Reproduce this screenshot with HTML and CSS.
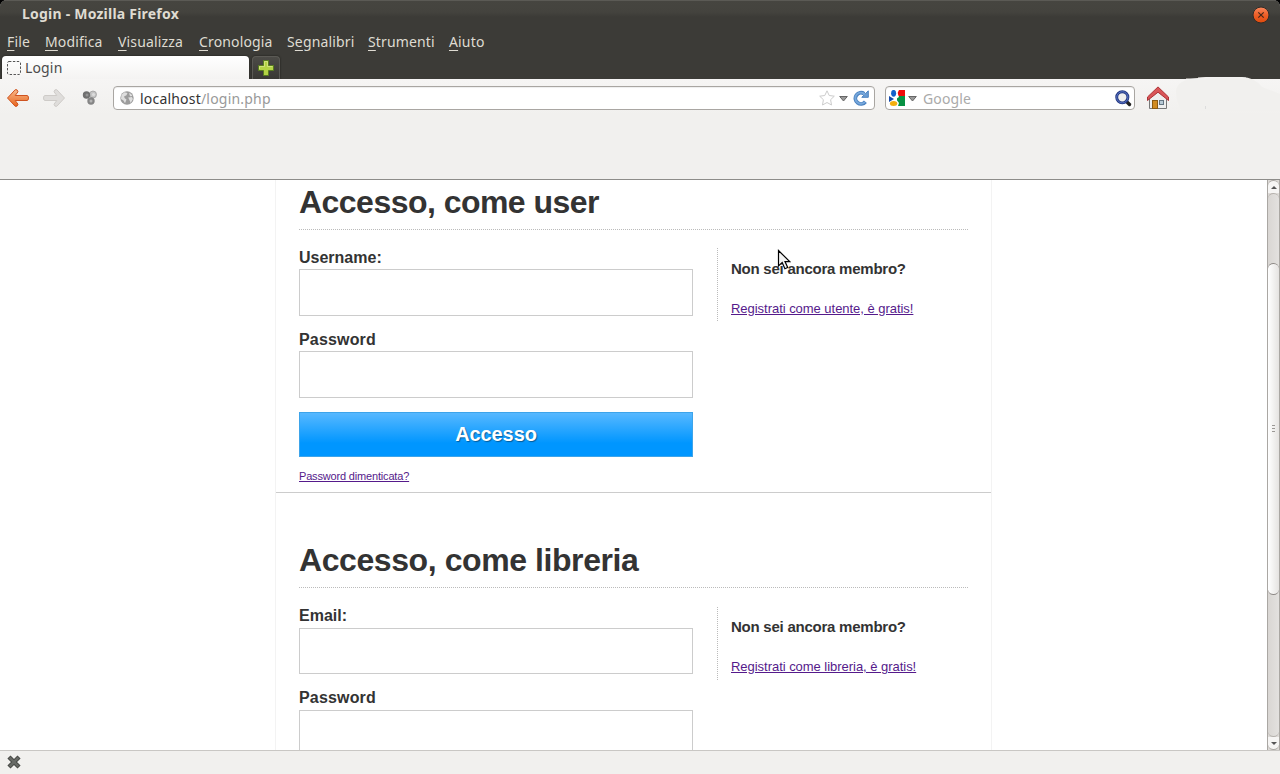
FILE: index.html
```html
<!DOCTYPE html>
<html lang="it">
<head>
<meta charset="utf-8">
<title>Login</title>
<link rel="stylesheet" href="styles.css">
</head>
<body>
<div class="window">
  <header class="chrome">
    <div class="titlebar">
      <span class="title">Login - Mozilla Firefox</span>
      <svg class="close" width="18" height="18" viewBox="0 0 18 18"><defs><linearGradient id="cg" x2="0" y2="1"><stop stop-color="#f9895f"/><stop offset=".5" stop-color="#ee5f28"/><stop offset="1" stop-color="#df4a0c"/></linearGradient></defs><circle cx="9" cy="9" r="8" fill="url(#cg)" stroke="#2f2c28"/><path d="M6.300 6.300l5.400 5.400M11.700 6.300l-5.400 5.400" stroke="#45281a" stroke-width="1.200"/></svg>
    </div>
    <nav class="menu">
      <span><u>F</u>ile</span><span><u>M</u>odifica</span><span><u>V</u>isualizza</span><span><u>C</u>ronologia</span><span>S<u>e</u>gnalibri</span><span><u>S</u>trumenti</span><span><u>A</u>iuto</span>
    </nav>
    <div class="tabs">
      <div class="tab"><svg width="14" height="14" viewBox="0 0 14 14"><rect x=".5" y=".5" width="13" height="13" rx="1.500" fill="none" stroke="#555" stroke-dasharray="2.400 1.500"/></svg><span>Login</span></div>
      <div class="newtab"><svg width="18" height="18" viewBox="0 0 18 18"><path d="M6.500 1.500h5v5h5v5h-5v5h-5v-5h-5v-5h5z" fill="#b4d445" stroke="#587c20"/><path d="M7.500 7.500V2.500h3v5h5M2.500 10V7.500h5" fill="none" stroke="#d0e37c"/></svg></div>
    </div>
  </header>
  <div class="toolbar">
    <svg class="back" width="24" height="20" viewBox="0 0 24 20"><defs><linearGradient id="bg" x2="0" y2="1"><stop stop-color="#f8b98a"/><stop offset="1" stop-color="#e8651d"/></linearGradient></defs><path d="M1.500 10L9.200 1.700Q11.500 1 12 3.800L9.200 7.500H21Q22.500 7.500 22.500 10T21 12.500H9.200L12 16.200Q11.500 19 9.200 18.300Z" fill="url(#bg)" stroke="#ce5320"/></svg>
    <svg class="forward" width="24" height="20" viewBox="0 0 24 20"><path d="M22.500 10L14.800 1.700Q12.500 1 12 3.800L14.800 7.500H3Q1.500 7.500 1.500 10T3 12.500H14.800L12 16.200Q12.500 19 14.800 18.300Z" fill="#dfdddb" stroke="#cecbc8"/></svg>
    <svg class="addon" width="16" height="16" viewBox="0 0 16 16"><circle cx="11" cy="4.500" r="3.500" fill="#c4c4c4" stroke="#999" stroke-width=".7"/><circle cx="4.500" cy="5" r="3.700" fill="#707070"/><circle cx="9" cy="11" r="3.700" fill="#858585"/><circle cx="5" cy="5" r="1.500" fill="#949494"/><circle cx="9" cy="11" r="1.500" fill="#b5b5b5"/><circle cx="11.500" cy="4.500" r="1.500" fill="#ddd"/></svg>
    <div class="field url">
      <svg width="14" height="14" viewBox="0 0 14 14"><circle cx="7" cy="7" r="6.700" fill="#9c9c9c"/><path d="M1.500 3.800L4.500 1.300 7.500 2 6.500 4.300 4 5.600 4.800 7.300 6.500 8.600 5 12.300 3.500 9.600 1 8ZM9.300 1.500l3.200 3-1.700 1-1.300-1.200ZM8.200 6.600l3.700-.5 1 2-2.200 3.900-1.300-3z" fill="#dedede"/></svg>
      <span class="address">localhost<i>/login.php</i></span>
      <svg class="star" width="16" height="16" viewBox="0 0 16 16"><path d="M8 .8l2.200 4.700 5.100.7-3.700 3.500.9 5.300L8 12.500l-4.500 2.500.9-5.300L.7 6.200l5.100-.7z" fill="#fff" stroke="#ccc"/></svg>
      <svg class="drop" width="9" height="6" viewBox="0 0 9 6"><path d="M.7.500h7.600L4.500 5z" fill="#999" stroke="#666"/></svg>
      <svg class="reload" width="16" height="16" viewBox="0 0 16 16"><path d="M12.400 11.800A5.600 5.600 0 1 1 11.200 3.700" fill="none" stroke="#4c83c0" stroke-width="3.800"/><path d="M8.800 7.300L15.300.8V7.300z" fill="#6b9dd2" stroke="#4c83c0"/><path d="M12 12A5.600 5.600 0 1 1 12 4.300" fill="none" stroke="#77a8dc" stroke-width="1.800"/></svg>
    </div>
    <div class="field search">
      <svg width="16" height="16" viewBox="0 0 16 16"><path d="M8 0h8v6H9z" fill="#f00b0b"/><path d="M8 6h8v10H8z" fill="#079143"/><path d="M0 6l5 3-5 3z" fill="#164aab"/><path d="M5 0h5L8.500 3 10 7 7 9l3 4-1 3H5z" fill="#fff"/><ellipse cx="4.600" cy="3.300" rx="2.500" ry="3.400" fill="#1260cb"/><ellipse cx="4.600" cy="13.500" rx="3.700" ry="2.500" fill="#f4af0c"/></svg>
      <svg class="drop" width="9" height="6" viewBox="0 0 9 6"><path d="M.7.500h7.600L4.500 5z" fill="#999" stroke="#666"/></svg>
      <span class="placeholder">Google</span>
      <svg width="17" height="17" viewBox="0 0 17 17"><path d="M11.500 11.500l3 3" stroke="#222" stroke-width="3.400" stroke-linecap="round"/><circle cx="7.300" cy="7.300" r="5.600" fill="#eee" stroke="#263a83" stroke-width="2.900"/><circle cx="7.300" cy="7.300" r="5.600" fill="none" stroke="#5773c5" stroke-width="1"/></svg>
    </div>
    <svg class="home" width="24" height="24" viewBox="0 0 24 24"><path d="M3.500 11L12 3.500l8.500 7.500v11.500h-17z" fill="#eee" stroke="#777"/><path d="M1.500 11L12 .9l10.500 10.100v3.500L12 6.200 1.500 14.500z" fill="#d95558" stroke="#ad3035"/><rect x="6.500" y="14.500" width="5" height="8" fill="#d18b20" stroke="#8b5a11"/><rect x="13.500" y="14.500" width="4" height="4" fill="#b7c9d5" stroke="#647582"/></svg>
    <svg class="smudge" width="104" height="34" viewBox="0 0 104 34"><path d="M0 15Q0 5 14 2L30 0H66Q78 0 86 10L104 17V34H6Q0 25 0 15Z" fill="#f1f0ee"/><path d="M10 2H30M22 1Q45 0 70 1" stroke="#f4f3f1" fill="none"/><path d="M29.500 29v3" stroke="#ddd"/></svg>
  </div>
  <div class="viewport">
    <main class="page">
      <section class="login first">
        <h1>Accesso, come user</h1>
        <div class="columns">
          <form class="form">
            <label for="user">Username:</label><input id="user">
            <label class="password" for="pass">Password</label><input id="pass" type="password">
            <button type="button">Accesso</button>
            <a class="forgot" href="#">Password dimenticata?</a>
          </form>
          <aside><h2>Non sei ancora membro?</h2><a href="#">Registrati come utente, è gratis!</a></aside>
        </div>
      </section>
      <section class="login second">
        <h1>Accesso, come libreria</h1>
        <div class="columns">
          <form class="form">
            <label for="email">Email:</label><input id="email">
            <label class="password" for="pass2">Password</label><input id="pass2" type="password">
          </form>
          <aside><h2>Non sei ancora membro?</h2><a href="#">Registrati come libreria, è gratis!</a></aside>
        </div>
      </section>
    </main>
    <div class="scrollbar">
      <div class="arrow up"><svg width="6" height="3" viewBox="0 0 6 3"><path d="M0 3L3 0l3 3z" fill="#555"/></svg></div>
      <div class="track"><div class="thumb"><i></i><i></i><i></i></div></div>
      <div class="arrow down"><svg width="6" height="3" viewBox="0 0 6 3"><path d="M0 0h6L3 3z" fill="#555"/></svg></div>
    </div>
  </div>
  <footer class="addonbar"><svg width="14" height="14" viewBox="0 0 14 14"><path d="M3.500 3.500l7 7M10.500 3.500l-7 7" stroke="#484a46" stroke-width="4.400" stroke-linecap="square"/><path d="M3.500 3.500l7 7M10.500 3.500l-7 7" stroke="#686a66" stroke-width="2.400" stroke-linecap="square"/></svg></footer>
  <svg class="pointer" width="14" height="22" viewBox="0 0 14 22"><path d="M1.500 1.500V17l3.700-3.400 2.700 6.200 2.800-1.300L8 12.600h4.700z" fill="#f5f5f5" stroke="#000" stroke-width="1.200"/></svg>
</div>
</body>
</html>
```

FILE: styles.css
```css
* { box-sizing: border-box; }
body { margin: 0; background: #000; }
svg { display: block; flex: none; }
.window {
  position: relative; width: 1280px; height: 774px; overflow: hidden;
  display: flex; flex-direction: column;
  border-radius: 7px 7px 0 0; background: #fff;
  font-family: "Noto Sans", sans-serif; font-size: 14px;
}
.chrome { height: 79px; flex: none; color: #dfdbd2; background: #3c3b37; }
.titlebar {
  height: 28px; display: flex; align-items: center; justify-content: space-between;
  padding: 0 10px 0 22px; border-top: 1px solid #5b5a55;
  background: linear-gradient(#464540 0, #44433e 11px, #3c3b37 16px);
  font-weight: bold; font-size: 14px;
}
.title { letter-spacing: .22px; line-height: 26px; margin-bottom: 1px; }
.menu {
  height: 28px; display: grid; align-items: start; line-height: 27px; padding-left: 7px;
  grid-template-columns: 38px 73px 81px 88px 81px 81px 60px; letter-spacing: .15px;
}
.menu u { text-underline-offset: 3px; text-decoration-skip-ink: none; }
.tabs { height: 23px; display: flex; gap: 3px; padding-left: 2px; }
.tab {
  width: 247px; display: flex; align-items: center; gap: 4px; padding-left: 5px;
  color: #4c4c4c; background: linear-gradient(#fff, #f4f3f2); border-radius: 4px 4px 0 0;
  letter-spacing: .15px;
}
.tab, .newtab { box-shadow: 0 0 2px #171714; }
.newtab {
  width: 28px; display: grid; place-items: center; border: 1px solid #5b5a55; border-bottom: 0;
  border-radius: 4px 4px 0 0; background: linear-gradient(#4c4b47, #393834);
}
.newtab svg { margin-top: -1px; }
.toolbar {
  position: relative; height: 101px; flex: none; display: flex; align-items: flex-start;
  padding: 7px 0 0 6px; background: linear-gradient(#f6f5f4, #f1f0ee 36px); border-bottom: 1px solid #8d8c89;
}
.back, .forward { margin-top: 2px; }
.forward { margin-left: 12px; }
.addon { margin: 4px 16px 0; }
.field {
  height: 24px; display: flex; align-items: center; background: #fff;
  border: 1px solid #a9a6a2; border-radius: 4px; box-shadow: inset 0 1px 1px #eee;
}
.url { width: 762px; margin-left: -1px; padding: 0 5px 0 6px; }
.address { flex: 1; margin-left: 6px; color: #333; letter-spacing: .2px; }
.address i { font-style: normal; color: #999; }
.url .drop { margin: 2px 5px 0 4px; }
.search { width: 250px; margin-left: 10px; padding: 0 2px 0 3px; }
.search .drop { margin: 2px 6px 0 3px; }
.placeholder { flex: 1; color: #aaa; letter-spacing: .15px; }
.home { margin-left: 11px; }
.smudge { position: absolute; right: 0; top: -2px; }
.viewport { height: 570px; flex: none; display: flex; background: #fff; }
.page {
  width: 717px; height: 570px; overflow: hidden; margin-left: 275px;
  border: solid #f3f3f3; border-width: 0 1px; color: #333;
  font-family: "Liberation Sans", Arial, sans-serif;
}
.login { padding: 47px 23px 0; height: 358px; }
.login.first { height: 313px; padding-top: 2px; border-bottom: 1px solid #ccc; }
h1 { height: 48px; margin: 0; line-height: 41px; font-size: 32px; letter-spacing: -.53px; border-bottom: 1px dotted #bbb; white-space: nowrap; }
.second h1 { letter-spacing: -.42px; }
.columns { display: flex; align-items: flex-start; padding-top: 18px; }
.form { width: 394px; display: flex; flex-direction: column; }
label { height: 21px; line-height: 19px; font-size: 16px; font-weight: bold; }
.password { letter-spacing: .17px; }
input { width: 394px; height: 47px; margin: 0 0 14px; padding: 0; border: 1px solid #ccc; background: #fff; }
.second input { height: 46px; margin-top: 1px; }
button {
  height: 45px; padding: 0; border: 1px solid #3da4ea; border-radius: 0;
  background: linear-gradient(#57b8ff, #0096ff 70%); color: #fff; letter-spacing: -.1px;
  font: bold 20px "Liberation Sans", Arial, sans-serif; text-shadow: 1px 1px 1px rgba(0, 0, 0, .4);
}
a { color: #551a8b; letter-spacing: -.035px; }
.forgot { align-self: flex-start; margin-top: 12px; font-size: 11px; line-height: 14px; letter-spacing: -.17px; }
aside { height: 73px; margin-left: 24px; padding-left: 13px; border-left: 1px dotted #bbb; font-size: 13px; white-space: nowrap; }
h2 { margin: 11px 0 22px; font-size: 15px; line-height: 20px; letter-spacing: -.24px; }
.second aside { margin-top: 1px; }
.second h2 { margin-top: 10px; }
aside a { display: block; line-height: 15px; }
.scrollbar {
  width: 13px; height: 570px; margin-left: auto; display: flex; flex-direction: column;
  border: solid #aaa7a3; border-width: 0 1px; background: #dedbd8;
}
.arrow { height: 13px; display: grid; place-items: center; background: #f6f5f4; }
.up { border-top: 1px solid #aaa7a3; border-radius: 6px 6px 0 0; }
.down { border-bottom: 1px solid #aaa7a3; border-radius: 0 0 6px 6px; }
.track {
  height: 544px; padding-top: 69px; border: solid #b5b1ad; border-width: 1px 0;
  border-radius: 6px; background: linear-gradient(90deg, #d9d6d3, #e3e1df);
}
.thumb {
  height: 332px; display: flex; flex-direction: column; align-items: center; justify-content: center; gap: 2px;
  padding-bottom: 2px; border: solid #8d8986; border-width: 1px 0; border-radius: 6px;
  background: linear-gradient(90deg, #fff, #e5e3e1);
}
.thumb i { width: 3px; height: 1px; background: #9b9895; }
.addonbar { height: 24px; flex: none; padding: 4px 7px; border-top: 1px solid #c9c7c4; background: #f1f0ee; }
.pointer { position: absolute; left: 777px; top: 249px; }
```
